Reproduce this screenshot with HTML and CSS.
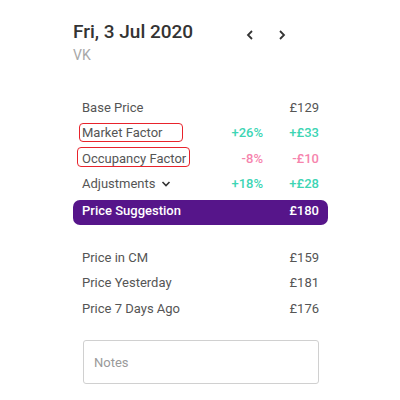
FILE: index.html
```html
<!DOCTYPE html>
<html lang="en">
<head>
<meta charset="utf-8">
<title>Price Details</title>
<link rel="stylesheet" href="styles.css">
</head>
<body>
<div class="panel">
  <div class="header">
    <div class="title-block">
      <div class="title">Fri, 3 Jul 2020</div>
      <div class="subtitle">VK</div>
    </div>
    <div class="nav">
      <button class="nav-btn" aria-label="Previous day">
        <svg width="8" height="10" viewBox="0 0 8 10"><path d="M6 1 L2 5 L6 9" fill="none" stroke="#333" stroke-width="1.8"/></svg>
      </button>
      <button class="nav-btn" aria-label="Next day">
        <svg width="8" height="10" viewBox="0 0 8 10"><path d="M2 1 L6 5 L2 9" fill="none" stroke="#333" stroke-width="1.8"/></svg>
      </button>
    </div>
  </div>

  <div class="rows">
    <div class="row">
      <span class="label">Base Price</span>
      <span class="pct"></span>
      <span class="val">£129</span>
    </div>
    <div class="row">
      <span class="label mark mark-market">Market Factor</span>
      <span class="pct up">+26%</span>
      <span class="val up">+£33</span>
    </div>
    <div class="row">
      <span class="label mark mark-occ">Occupancy Factor</span>
      <span class="pct down">-8%</span>
      <span class="val down">-£10</span>
    </div>
    <div class="row">
      <span class="label">Adjustments<svg class="caret" width="10" height="8" viewBox="0 0 10 8"><path d="M1.5 2 L5 5.5 L8.5 2" fill="none" stroke="#333" stroke-width="1.6"/></svg></span>
      <span class="pct up">+18%</span>
      <span class="val up">+£28</span>
    </div>
  </div>

  <div class="suggestion">
    <span>Price Suggestion</span>
    <span>£180</span>
  </div>

  <div class="rows history">
    <div class="row">
      <span class="label">Price in CM</span>
      <span class="pct"></span>
      <span class="val">£159</span>
    </div>
    <div class="row">
      <span class="label">Price Yesterday</span>
      <span class="pct"></span>
      <span class="val">£181</span>
    </div>
    <div class="row">
      <span class="label">Price 7 Days Ago</span>
      <span class="pct"></span>
      <span class="val">£176</span>
    </div>
  </div>

  <div class="notes">Notes</div>
</div>
</body>
</html>
```
FILE: styles.css
```css
html, body {
  margin: 0;
  padding: 0;
  background: #ffffff;
}

body {
  font-family: Roboto, "Liberation Sans", sans-serif;
  color: #555555;
}

.panel {
  width: 255px;
  margin-left: 73px;
  padding-top: 20px;
}

.header {
  display: flex;
  align-items: flex-start;
}

.title {
  font-size: 19px;
  font-weight: 500;
  line-height: 24px;
  color: #333333;
}

.subtitle {
  margin-top: 2px;
  font-size: 14px;
  line-height: 18px;
  color: #a8a8a8;
}

.nav {
  display: flex;
  margin-left: auto;
  margin-right: 30px;
  margin-top: 3px;
}

.nav-btn {
  width: 32px;
  height: 24px;
  padding: 0;
  border: 0;
  background: transparent;
  display: flex;
  align-items: center;
  justify-content: center;
}

.rows {
  margin-top: 30.5px;
  padding: 0 9px;
}

.row {
  display: grid;
  grid-template-columns: 1fr 56px 56px;
  height: 25.5px;
  line-height: 25.5px;
  font-size: 13px;
}

.label {
  position: relative;
  white-space: nowrap;
}

.pct, .val {
  text-align: right;
  font-weight: 500;
}

.row .val:not(.up):not(.down) {
  font-weight: 400;
}

.up {
  color: #3dd5b4;
}

.down {
  color: #f684ad;
}

.caret {
  margin-left: 5px;
  vertical-align: 0px;
}

.mark::after {
  content: "";
  position: absolute;
  border: 1.5px solid #e8232c;
  border-radius: 4px;
  box-sizing: border-box;
}

.mark-market::after {
  left: -3px;
  top: 3px;
  width: 104px;
  height: 19px;
}

.mark-occ::after {
  left: -5px;
  top: 1.5px;
  width: 113px;
  height: 20px;
}

.suggestion {
  margin-top: 3px;
  display: flex;
  justify-content: space-between;
  height: 25px;
  box-sizing: border-box;
  padding: 0 9px 4px 9px;
  line-height: 21px;
  font-size: 13px;
  font-weight: 500;
  color: #ffffff;
  background: #56158a;
  border-radius: 7px;
}

.history {
  margin-top: 20px;
}

.notes {
  margin: 19px 9px 0 10px;
  height: 44px;
  box-sizing: border-box;
  border: 1px solid #d0d0d0;
  border-radius: 3px;
  padding: 13px 0 0 10px;
  font-size: 13px;
  line-height: 18px;
  color: #9a9a9a;
}
```
